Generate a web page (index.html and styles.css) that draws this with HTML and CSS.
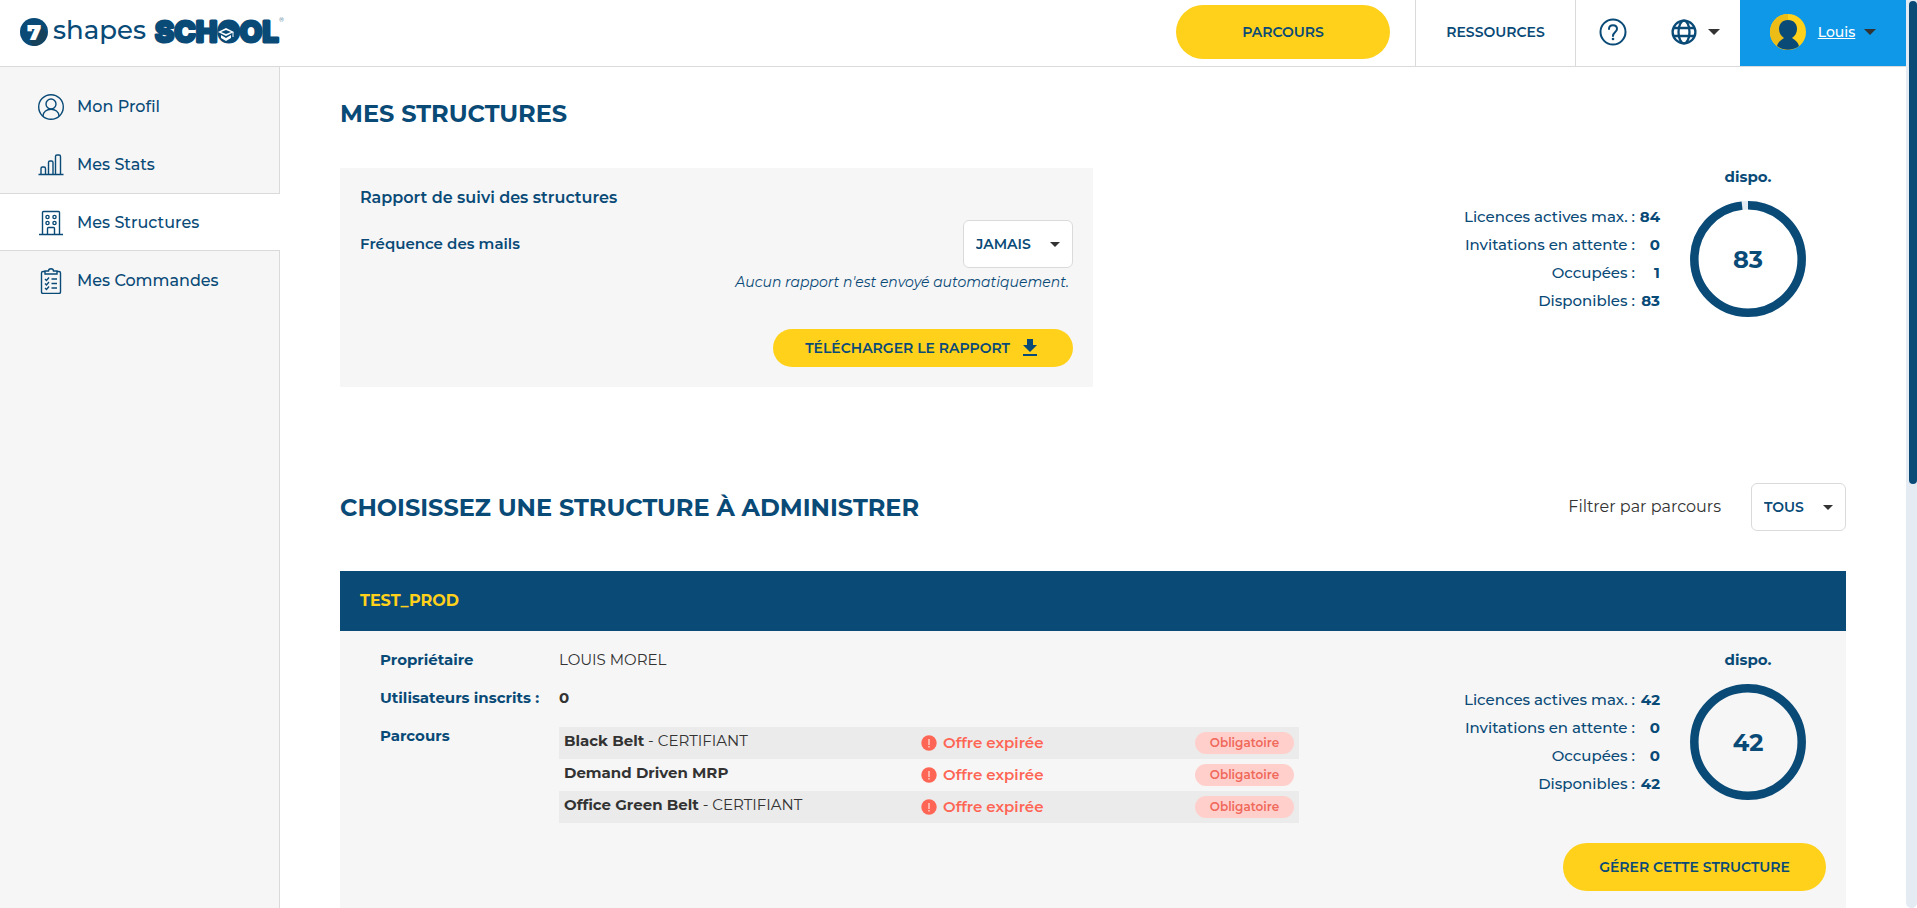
FILE: index.html
```html
<!DOCTYPE html>
<html lang="fr">
<head>
    <meta charset="UTF-8">
    <meta name="viewport" content="width=device-width, initial-scale=1.0">
    <title>Mes structures</title>
    <link rel="stylesheet" href="styles.css">
</head>
<body>
    <div class="page">
        <header class="header">
            <a href="#" class="logo" aria-label="7 shapes SCHOOL">
                <svg width="266" height="44" viewBox="0 -6 266 44">
                    <circle cx="14" cy="16" r="14" fill="#094a77"/>
                    <path d="M21 9l6 9a14 14 0 0 1-14 12l-3-4z" fill="#17425c"/>
                    <text x="14" y="24" class="logo-seven">7</text>
                    <text x="33" y="23" class="logo-shapes">shapes</text>
                    <text x="135" y="26" class="logo-school">SCHOOL</text>
                    <circle cx="206" cy="16" r="8" fill="#094a77"/>
                    <path d="M198 16l8-4 8 4-8 4zM201 19v3l5 3 5-3v-3l-5 3z" fill="#fff"/>
                    <path d="M201 16l5-2 5 2-5 2z" fill="#094a77"/>
                    <path d="M213 16v5" stroke="#fff"/>
                    <text x="259" y="6" class="logo-mark">®</text>
                </svg>
            </a>
            <nav class="topnav">
                <a href="#" class="btn btn-parcours">PARCOURS</a>
                <a href="#" class="nav-ressources">RESSOURCES</a>
                <div class="nav-tools">
                    <button class="icon-btn" aria-label="Aide">
                        <svg width="28" height="28" viewBox="0 0 28 28" fill="none" stroke="#094a77" stroke-width="2">
                            <circle cx="14" cy="14" r="12.5"/>
                            <path d="M10 11c0-5 8-5 8 0 0 3-4 3-4 7" stroke-linecap="round"/>
                            <circle cx="14" cy="21" r="1.3" fill="#094a77" stroke="none"/>
                        </svg>
                    </button>
                    <button class="icon-btn" aria-label="Langue">
                        <svg width="26" height="26" viewBox="0 0 26 26" fill="none" stroke="#094a77" stroke-width="2.3">
                            <circle cx="13" cy="13" r="11.4"/>
                            <ellipse cx="13" cy="13" rx="5.5" ry="11.4"/>
                            <path d="M2 9h22M2 17h22"/>
                        </svg>
                        <span class="caret"></span>
                    </button>
                </div>
                <button class="user">
                    <svg width="36" height="36" viewBox="0 0 36 36">
                        <circle cx="18" cy="18" r="18" fill="#ffd11b"/>
                        <path d="M18 0a18 18 0 0 0 0 36z" fill="#edbd17"/>
                        <path d="M18 6c-6 0-9 4-9 9 0 4 2 7 5 9-3 2-6 4-7 8 6 5 16 5 22 0-1-4-4-6-7-8 3-2 5-5 5-9 0-5-3-9-9-9z" fill="#094a77"/>
                    </svg>
                    <span class="user-name">Louis</span>
                    <span class="caret"></span>
                </button>
            </nav>
        </header>

        <div class="layout">
            <aside class="sidebar">
                <a href="#" class="side-link">
                    <svg width="26" height="26" viewBox="0 0 26 26">
                        <circle cx="13" cy="13" r="12.3"/>
                        <circle cx="13" cy="10" r="5"/>
                        <path d="M5 22c0-9 16-9 16 0"/>
                    </svg>
                    Mon Profil
                </a>
                <a href="#" class="side-link">
                    <svg width="26" height="26" viewBox="0 0 26 26">
                        <path d="M.5 22.500h25M3 22v-5.500q0-1.500 1.500-1.500h1.500q1.500 0 1.500 1.500v5.500M10.500 22V10.500q0-1.500 1.500-1.500h1.500q1.500 0 1.500 1.500v11.500M17.500 22V4.500q0-1.500 1.500-1.500h2q1.500 0 1.500 1.500v17.500"/>
                    </svg>
                    Mes Stats
                </a>
                <a href="#" class="side-link active">
                    <svg width="26" height="26" viewBox="0 0 26 26">
                        <path d="M1 24.500h24M4.500 24V2.500q0-1 1-1h15q1 0 1 1V24M9.500 24v-5.500q0-1 1-1h5q1 0 1 1V24"/>
                        <circle cx="9.500" cy="7" r="1.600"/>
                        <circle cx="16.500" cy="7" r="1.600"/>
                        <circle cx="9.500" cy="13" r="1.600"/>
                        <circle cx="16.500" cy="13" r="1.600"/>
                    </svg>
                    Mes Structures
                </a>
                <a href="#" class="side-link">
                    <svg width="26" height="26" viewBox="0 0 26 26">
                        <path d="M7 3.500H5q-1.500 0-1.500 1.500v19q0 1.500 1.500 1.500h16q1.500 0 1.500-1.500V5q0-1.500-1.500-1.500h-2M7 6V3h3.500q0-2.300 2.500-2.300T15.500 3H19v3zM13.500 11H19M13.500 15.500H19M13.500 20H19M7 11l1.500 1.500 2.500-3M7 15.500l1.500 1.500 2.500-3M7 20l1.500 1.500 2.500-3"/>
                    </svg>
                    Mes Commandes
                </a>
            </aside>

            <main class="main">
                <h1 class="title">MES STRUCTURES</h1>

                <section class="summary">
                    <div class="report">
                        <h2 class="report-title">Rapport de suivi des structures</h2>
                        <div class="report-row">
                            <label for="frequence">Fréquence des mails</label>
                            <span class="select">
                                <select id="frequence">
                                    <option>JAMAIS</option>
                                </select>
                            </span>
                        </div>
                        <p class="report-note">Aucun rapport n'est envoyé automatiquement.</p>
                        <button class="btn btn-download">
                            TÉLÉCHARGER LE RAPPORT
                            <svg width="16" height="18" viewBox="0 0 16 18" fill="#094a77">
                                <path d="M5 0h6v6h4l-7 7-7-7h4zM1 15h14v2H1z"/>
                            </svg>
                        </button>
                    </div>

                    <div class="stats">
                        <div class="stats-label">dispo.</div>
                        <dl class="stats-list">
                            <dt>Licences actives max. :</dt><dd>84</dd>
                            <dt>Invitations en attente :</dt><dd>0</dd>
                            <dt>Occupées :</dt><dd>1</dd>
                            <dt>Disponibles :</dt><dd>83</dd>
                        </dl>
                        <div class="ring">
                            <svg width="116" height="116" viewBox="0 0 116 116" fill="none" stroke-width="8.500">
                                <circle cx="58" cy="58" r="53.700" stroke="#e4ebf3"/>
                                <circle cx="58" cy="58" r="53.700" stroke="#094a77" pathLength="84" stroke-dasharray="82.500 1.500" transform="rotate(-90 58 58)"/>
                            </svg>
                            <span class="ring-value">83</span>
                        </div>
                    </div>
                </section>

                <div class="choose">
                    <h2 class="title">CHOISISSEZ UNE STRUCTURE À ADMINISTRER</h2>
                    <div class="filter">
                        <label for="parcours">Filtrer par parcours</label>
                        <span class="select">
                            <select id="parcours">
                                <option>TOUS</option>
                            </select>
                        </span>
                    </div>
                </div>

                <section class="structure">
                    <h3 class="structure-name">TEST_PROD</h3>
                    <div class="structure-body">
                        <dl class="details">
                            <dt>Propriétaire</dt>
                            <dd>LOUIS MOREL</dd>
                            <dt>Utilisateurs inscrits :</dt>
                            <dd><b>0</b></dd>
                            <dt>Parcours</dt>
                            <dd>
                                <table class="courses">
                                    <tr>
                                        <td class="course"><b>Black Belt</b> - CERTIFIANT</td>
                                        <td class="offer">
                                            <span class="expired"><svg width="16" height="16" viewBox="0 0 16 16"><circle cx="8" cy="8" r="7.700"/><path d="M7.500 4h1v6h-1zM7.500 11h1v1.500h-1z" fill="#fff"/></svg>Offre expirée</span>
                                        </td>
                                        <td class="status"><span class="badge">Obligatoire</span></td>
                                    </tr>
                                    <tr>
                                        <td class="course"><b>Demand Driven MRP</b></td>
                                        <td class="offer">
                                            <span class="expired"><svg width="16" height="16" viewBox="0 0 16 16"><circle cx="8" cy="8" r="7.700"/><path d="M7.500 4h1v6h-1zM7.500 11h1v1.500h-1z" fill="#fff"/></svg>Offre expirée</span>
                                        </td>
                                        <td class="status"><span class="badge">Obligatoire</span></td>
                                    </tr>
                                    <tr>
                                        <td class="course"><b>Office Green Belt</b> - CERTIFIANT</td>
                                        <td class="offer">
                                            <span class="expired"><svg width="16" height="16" viewBox="0 0 16 16"><circle cx="8" cy="8" r="7.700"/><path d="M7.500 4h1v6h-1zM7.500 11h1v1.500h-1z" fill="#fff"/></svg>Offre expirée</span>
                                        </td>
                                        <td class="status"><span class="badge">Obligatoire</span></td>
                                    </tr>
                                </table>
                            </dd>
                        </dl>

                        <div class="structure-side">
                            <div class="stats">
                                <div class="stats-label">dispo.</div>
                                <dl class="stats-list">
                                    <dt>Licences actives max. :</dt><dd>42</dd>
                                    <dt>Invitations en attente :</dt><dd>0</dd>
                                    <dt>Occupées :</dt><dd>0</dd>
                                    <dt>Disponibles :</dt><dd>42</dd>
                                </dl>
                                <div class="ring">
                                    <svg width="116" height="116" viewBox="0 0 116 116" fill="none" stroke-width="8.500">
                                        <circle cx="58" cy="58" r="53.700" stroke="#094a77"/>
                                    </svg>
                                    <span class="ring-value">42</span>
                                </div>
                            </div>
                            <button class="btn btn-manage">GÉRER CETTE STRUCTURE</button>
                        </div>
                    </div>
                </section>
            </main>
        </div>
    </div>
    <div class="scrollbar"><div class="scrollbar-thumb"></div></div>
</body>
</html>
```

FILE: styles.css
```css
* {
    box-sizing: border-box;
}

body {
    margin: 0;
    height: 100vh;
    overflow: hidden;
    display: flex;
    background: #fff;
    color: #333;
    font-family: Montserrat, Inter, sans-serif;
    font-size: 15px;
    line-height: 20px;
}

h1, h2, h3, p, dl, dd {
    margin: 0;
}

a {
    color: inherit;
    text-decoration: none;
}

button, select {
    font-family: inherit;
    font-size: inherit;
    color: inherit;
    border: none;
    background: none;
    padding: 0;
    cursor: pointer;
}

b {
    font-weight: 700;
}

.page {
    flex: 1;
    min-width: 0;
    display: flex;
    flex-direction: column;
}

/* header */

.header {
    display: flex;
    flex-shrink: 0;
    justify-content: space-between;
    height: 67px;
    border-bottom: 1px solid #dadada;
    color: #094a77;
    font-size: 14px;
}

.logo {
    display: flex;
    align-items: center;
    padding: 0 0 2px 20px;
}

.logo-seven {
    font-size: 22px;
    font-weight: 900;
    fill: #fff;
    text-anchor: middle;
}

.logo-shapes {
    font-size: 26px;
    font-weight: 500;
    fill: #094a77;
}

.logo-school {
    font-family: Inter, sans-serif;
    font-size: 29px;
    font-weight: 800;
    fill: #094a77;
    stroke: #094a77;
    stroke-width: 3;
    stroke-linejoin: round;
}

.logo-mark {
    font-size: 6px;
    fill: #094a77;
}

.topnav {
    display: flex;
}

.btn {
    display: flex;
    align-items: center;
    justify-content: center;
    background: #ffd11b;
    color: #094a77;
    font-size: 14px;
    font-weight: 600;
    border-radius: 27px;
}

.btn-parcours {
    width: 214px;
    height: 54px;
    margin: 5px 25px 0 0;
}

.nav-ressources {
    display: flex;
    align-items: center;
    justify-content: center;
    width: 160px;
    padding-bottom: 2px;
    border-left: 1px solid #dadada;
    font-weight: 600;
}

.nav-tools {
    display: flex;
    align-items: center;
    gap: 44px;
    padding: 0 20px 2px 23px;
    border-left: 1px solid #dadada;
}

.icon-btn {
    display: flex;
    align-items: center;
    gap: 11px;
}

.caret, .select::after {
    width: 0;
    height: 0;
    border: 6px solid transparent;
    border-top-color: #333;
    border-bottom: none;
}

.user {
    display: flex;
    align-items: center;
    justify-content: center;
    gap: 9px;
    width: 166px;
    padding-bottom: 2px;
    background: #1098e8;
    color: #fff;
}

.user-name {
    margin-left: 3px;
    font-weight: 500;
    text-decoration: underline;
}

/* layout */

.layout {
    flex: 1;
    min-height: 0;
    display: flex;
}

.sidebar {
    width: 280px;
    flex-shrink: 0;
    padding-top: 10px;
    background: #f6f6f6;
    border-right: 1px solid #dadada;
}

.side-link {
    display: flex;
    align-items: center;
    gap: 13px;
    height: 58px;
    padding: 2px 0 0 38px;
    font-size: 16px;
    font-weight: 500;
    color: #094a77;
}

.side-link svg {
    fill: none;
    stroke: #094a77;
    stroke-width: 1.4;
}

.side-link.active {
    margin-right: -1px;
    background: #fff;
    border-top: 1px solid #dadada;
    border-bottom: 1px solid #dadada;
}

.main {
    flex: 1;
    min-width: 0;
    padding: 29px 60px;
}

.title {
    padding-top: 2px;
    font-size: 24px;
    line-height: 32px;
    font-weight: 700;
    color: #094a77;
}

/* report */

.summary {
    display: flex;
    justify-content: space-between;
    align-items: flex-start;
    margin-top: 38px;
}

.summary .stats {
    margin-right: 40px;
}

.report {
    width: 50%;
    padding: 20px;
    background: #f6f6f6;
    color: #094a77;
}

.report-title {
    font-size: 16px;
    line-height: 20px;
    font-weight: 600;
}

.report-row {
    display: flex;
    align-items: center;
    justify-content: space-between;
    margin-top: 12px;
    font-weight: 600;
}

.select {
    display: flex;
    align-items: center;
    position: relative;
}

.select select {
    appearance: none;
    height: 48px;
    padding: 0 41px 0 12px;
    border: 1px solid #dadada;
    border-radius: 6px;
    background: #fff;
    color: #094a77;
    font-size: 14px;
    font-weight: 600;
}

.select::after {
    content: "";
    position: absolute;
    right: 13px;
    border-width: 5px;
    border-bottom: none;
    pointer-events: none;
}

.report-note {
    margin-top: 4px;
    padding-right: 4px;
    text-align: right;
    font-size: 14px;
    font-style: italic;
}

.btn-download {
    gap: 12px;
    height: 38px;
    margin: 37px 0 0 auto;
    padding: 0 35px 0 32px;
}

/* licences */

.stats {
    display: grid;
    grid-template-columns: auto 116px;
    column-gap: 30px;
    align-items: center;
    color: #094a77;
}

.stats-label {
    grid-column: 2;
    margin-bottom: 15px;
    line-height: 18px;
    text-align: center;
    font-weight: 700;
}

.stats-list {
    display: grid;
    grid-template-columns: auto 25px;
    line-height: 28px;
    text-align: right;
    font-weight: 500;
}

.stats-list dd {
    font-weight: 700;
}

.ring {
    display: grid;
    place-items: center;
    height: 116px;
}

.ring svg, .ring-value {
    grid-area: 1 / 1;
}

.ring-value {
    padding-top: 2px;
    font-size: 24px;
    font-weight: 700;
}

/* structures */

.choose {
    display: flex;
    align-items: center;
    justify-content: space-between;
    margin: 96px 0 40px;
}

.filter {
    display: flex;
    align-items: center;
    gap: 30px;
}

.filter label {
    font-size: 16px;
}

.structure-name {
    padding: 0 20px;
    background: #094a77;
    color: #ffd11b;
    font-size: 16px;
    line-height: 60px;
    font-weight: 700;
}

.structure-body {
    display: flex;
    justify-content: space-between;
    padding: 10px 20px 40px 40px;
    background: #f6f6f6;
}

.details {
    display: grid;
    grid-template-columns: 179px 1fr;
    align-content: start;
    flex-basis: 919px;
    line-height: 38px;
}

.details dt {
    color: #094a77;
    font-weight: 700;
}

.courses {
    width: 100%;
    margin-top: 10px;
    border-collapse: collapse;
    line-height: 20px;
}

.courses tr:nth-child(odd) {
    background: #ebebeb;
}

.courses td {
    height: 32px;
    padding: 0 5px;
}

.courses .course {
    padding-bottom: 4px;
}

.offer {
    width: 274px;
}

.status {
    width: 109px;
}

.expired {
    display: flex;
    align-items: center;
    gap: 6px;
    color: #ff6554;
    font-weight: 600;
}

.expired svg {
    fill: #ff6554;
}

.badge {
    display: block;
    border-radius: 11px;
    background: #ffcfcc;
    color: #f0695b;
    font-size: 12px;
    line-height: 22px;
    font-weight: 600;
    text-align: center;
}

.structure-side {
    display: flex;
    flex-direction: column;
    align-items: flex-end;
    padding-top: 10px;
}

.structure-side .stats {
    margin-right: 20px;
}

.btn-manage {
    width: 263px;
    height: 48px;
    margin-top: 43px;
}

/* scrollbar */

.scrollbar {
    width: 11px;
    padding: 1px 0 0 3px;
    background: #e4ebf3;
    border-radius: 0 0 6px 6px;
}

.scrollbar-thumb {
    height: 53.3%;
    border-radius: 4px;
    background: #094a77;
}
```
